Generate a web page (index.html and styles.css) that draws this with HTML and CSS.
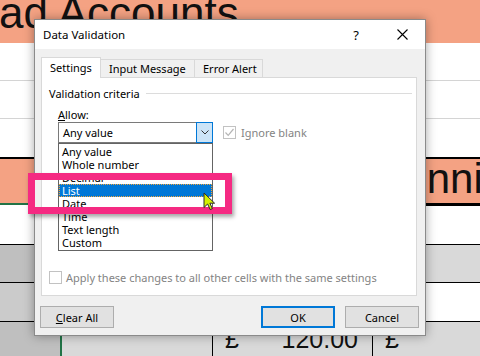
FILE: index.html
```html
<!DOCTYPE html>
<html lang="en">
<head>
  <meta charset="UTF-8">
  <meta name="viewport" content="width=device-width, initial-scale=1.0">
  <title>Data Validation</title>
  <link rel="stylesheet" href="styles.css">
</head>
<body>

  <!-- Sheet behind the dialog -->
  <div class="sheet">
    <div class="row title"><span>ad Accounts</span></div>
    <div class="row blank"></div>
    <div class="row blank"></div>
    <div class="row blank last"></div>
    <div class="row head">
      <div class="cell a"></div>
      <div class="cell b"></div>
      <div class="cell c"></div>
      <div class="cell d">Running</div>
    </div>
    <div class="row plain"></div>
    <div class="row grey"><div class="cell a"></div></div>
    <div class="row plain shade"><div class="cell a"></div></div>
    <div class="row grey money">
      <div class="cell a"></div>
      <div class="cell b"></div>
      <div class="cell c"><span>£</span><span>120.00</span></div>
      <div class="cell d"><span>£</span></div>
    </div>
  </div>

  <!-- Data Validation dialog -->
  <div class="dialog">
    <div class="titlebar">
      <span class="caption">Data Validation</span>
      <span class="tb-btn">?</span>
      <span class="tb-btn">
        <svg width="11" height="11" viewBox="0 0 11 11"><path d="M0.5 0.5 L10.5 10.5 M10.5 0.5 L0.5 10.5" stroke="#000" stroke-width="1.1" fill="none"/></svg>
      </span>
    </div>

    <div class="tabs">
      <div class="tab active">Settings</div>
      <div class="tab">Input Message</div>
      <div class="tab">Error Alert</div>
    </div>

    <div class="panel">
      <div class="group">Validation criteria</div>
      <div class="field-label"><u>A</u>llow:</div>
      <div class="field-row">
        <div class="combo">
          <div class="combo-box">
            <span>Any value</span>
            <span class="combo-btn">
              <svg width="8" height="5" viewBox="0 0 8 5"><path d="M0.5 0.5 L4 4 L7.5 0.5" stroke="#333" stroke-width="1" fill="none"/></svg>
            </span>
          </div>
          <ul class="list">
            <li>Any value</li>
            <li>Whole number</li>
            <li>Decimal</li>
            <li class="sel">List</li>
            <li>Date</li>
            <li>Time</li>
            <li>Text length</li>
            <li>Custom</li>
          </ul>
        </div>
        <div class="check">
          <span class="box">
            <svg width="11" height="11" viewBox="0 0 11 11"><path d="M1.5 5.5 L4.2 8.3 L9.5 2" stroke="#b5b5b5" stroke-width="1.2" fill="none"/></svg>
          </span>
          Ignore blank
        </div>
      </div>
      <div class="apply"><span class="box"></span>Apply these changes to all other cells with the same settings</div>
    </div>

    <div class="buttons">
      <button class="btn"><u>C</u>lear All</button>
      <button class="btn default">OK</button>
      <button class="btn">Cancel</button>
    </div>
  </div>

  <!-- annotation over the screenshot -->
  <div class="marker"></div>
  <svg class="cursor" width="14" height="19" viewBox="0 0 14 19">
    <path d="M1 1 L1 15.5 L4.6 12 L7.2 17.6 L9.4 16.6 L6.9 11.2 L11.6 11.2 Z" fill="#d4f000" stroke="#2b2b2b" stroke-width="1" stroke-linejoin="round"/>
  </svg>

</body>
</html>
```

FILE: styles.css
```css
* { box-sizing: border-box; }
html, body {
  margin: 0;
  width: 480px;
  height: 356px;
  overflow: hidden;
  background: #fff;
  font-family: 'Noto Sans', sans-serif;
}
body { position: relative; }

/* sheet */
.sheet { width: 480px; }
.row {
  display: flex;
  width: 480px;
  align-items: flex-start;
}
.cell { flex: none; height: 100%; }
.a { width: 60px; }
.b { width: 152px; }
.c { width: 160px; }
.d { width: 108px; }

.title {
  height: 43px;
  background: #f4a283;
  overflow: hidden;
  font-family: 'Liberation Sans', sans-serif;
  font-size: 44px;
  line-height: 44px;
  color: #111;
}
.title span {
  display: block;
  margin: -9px 0 0 -1px;
  white-space: nowrap;
}
.blank {
  height: 38px;
  border-bottom: 1px solid #d4d4d4;
}
.blank.last { border-bottom: 0; }

.head {
  height: 49px;
  border-top: 2px solid #000;
}
.head .cell {
  background: #f4a283;
  border-bottom: 3px solid #000;
}
.head .a, .head .b {
  height: 46px;
  border-bottom: 2px solid #217346;
}
.head .d {
  font-family: 'Liberation Sans', sans-serif;
  font-size: 42px;
  line-height: 40px;
  padding-left: 1px;
  white-space: nowrap;
  overflow: hidden;
  color: #111;
}

.plain {
  height: 39px;
  border-bottom: 1px solid #000;
}
.grey {
  height: 38px;
  background: #d9d9d9;
  border-bottom: 1px solid #000;
}
.grey .a { background: #bfbfbf; }
.shade .a { background: #cbcbcb; }

.money {
  height: 34px;
  border-bottom: 0;
  font-family: 'Liberation Sans', sans-serif;
  font-size: 25px;
  line-height: 34px;
  color: #111;
}
.money .b { border-left: 2px solid #217346; }
.money .c {
  display: flex;
  justify-content: space-between;
  border-left: 1px solid #000;
  padding: 0 14px 0 12px;
}
.money .d {
  border-left: 1px solid #000;
  padding-left: 12px;
}

/* dialog */
.dialog {
  position: absolute;
  left: 34px;
  top: 19px;
  z-index: 1;
  width: 392px;
  height: 317px;
  border: 1px solid #8a8a8a;
  background: #f0f0f0;
  box-shadow: 0 0 10px rgba(0,0,0,0.35);
  display: flex;
  flex-direction: column;
  font-size: 11px;
  color: #000;
}
.titlebar {
  height: 29px;
  background: #fff;
  display: flex;
  align-items: center;
  padding-left: 8px;
  font-size: 11.5px;
}
.caption { flex: 1; }
.tb-btn {
  width: 46px;
  height: 29px;
  display: flex;
  align-items: center;
  justify-content: center;
  font-size: 13px;
}

.tabs {
  display: flex;
  align-items: flex-end;
  height: 20px;
  margin: 8px 0 0 6px;
}
.tab {
  height: 18px;
  border: 1px solid #d9d9d9;
  border-bottom: 0;
  line-height: 17px;
  padding-left: 8px;
  margin-left: -1px;
  white-space: nowrap;
}
.tab:nth-child(2) { width: 95px; }
.tab:nth-child(3) { width: 69px; }
.tab.active {
  width: 60px;
  height: 21px;
  margin-left: 0;
  margin-bottom: -1px;
  line-height: 19px;
  background: #fff;
  position: relative;
  z-index: 1;
}

.panel {
  height: 219px;
  margin: 0 8px 0 6px;
  border: 1px solid #d9d9d9;
  background: #fff;
  display: flex;
  flex-direction: column;
  padding: 0 4px 0 7px;
}
.group {
  display: flex;
  align-items: center;
  margin-top: 8px;
  line-height: 15px;
}
.group::after {
  content: "";
  flex: 1;
  height: 1px;
  background: #dcdcdc;
  margin-left: 6px;
}
.field-label {
  margin: 6px 0 0 9px;
  line-height: 15px;
}
.field-row {
  display: flex;
  align-items: center;
  margin-left: 9px;
}
.combo {
  position: relative;
  width: 155px;
}
.combo-box {
  height: 21px;
  border: 1px solid #7a7a7a;
  display: flex;
  align-items: center;
  padding-left: 4px;
}
.combo-btn {
  width: 17px;
  height: 21px;
  margin: -1px -1px -1px auto;
  border: 1px solid #0078d7;
  background: #cce4f7;
  display: flex;
  align-items: center;
  justify-content: center;
}
.list {
  position: absolute;
  left: 0;
  top: 21px;
  width: 155px;
  margin: 0;
  padding: 1px 0;
  list-style: none;
  border: 1px solid #646464;
  background: #fff;
  z-index: 2;
}
.list li {
  height: 13px;
  line-height: 13px;
  padding-left: 3px;
}
.list .sel {
  background: #0078d7;
  color: #fff;
  outline: 1px dotted #f2a53a;
  outline-offset: -1px;
}
.check {
  display: flex;
  align-items: center;
  gap: 5px;
  margin-left: 10px;
  color: #838383;
}
.box {
  width: 13px;
  height: 13px;
  border: 1px solid #c2c2c2;
  background: #fff;
  display: flex;
  align-items: center;
  justify-content: center;
}
.apply {
  margin-top: auto;
  margin-bottom: 10px;
  display: flex;
  align-items: center;
  gap: 4px;
  line-height: 15px;
  color: #838383;
  white-space: nowrap;
}

.buttons {
  display: flex;
  gap: 10px;
  margin-top: 10px;
  padding: 0 6px 0 5px;
}
.btn {
  width: 74px;
  height: 22px;
  padding: 0;
  border: 1px solid #adadad;
  background: #e1e1e1;
  font-family: inherit;
  font-size: 11px;
  color: #000;
}
.btn.default {
  margin-left: auto;
  border: 2px solid #0078d7;
}

/* pink highlight and pointer */
.marker {
  position: absolute;
  left: 28px;
  top: 173px;
  z-index: 5;
  width: 204px;
  height: 41px;
  border: 7px solid #f52a82;
  box-shadow: 2px 3px 4px rgba(0,0,0,0.35);
}
.cursor {
  position: absolute;
  left: 203px;
  top: 192px;
  z-index: 6;
}
```
